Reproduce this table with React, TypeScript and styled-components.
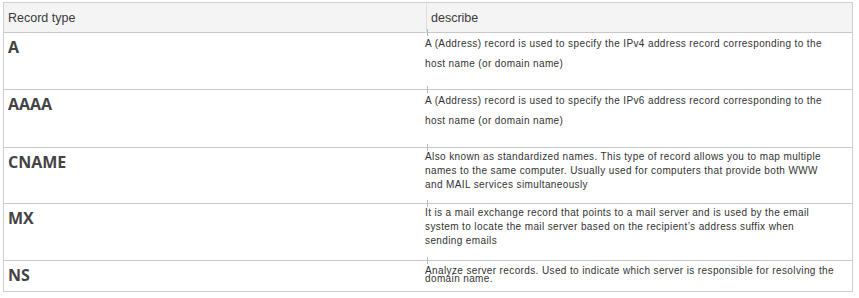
import React from "react";
import styled, { createGlobalStyle } from "styled-components";

const Global = createGlobalStyle`
  html, body { margin: 0; padding: 0; background: #ffffff; }
  body { font-family: "Liberation Sans", Arial, sans-serif; }
`;

const Page = styled.div`
  padding: 2px 0 0 3px;
`;

const Table = styled.div`
  width: 850px;
  box-sizing: border-box;
  border: 1px solid #cfcfcf;
  display: grid;
  grid-template-columns: 423px 1fr;
`;

const HeadCell = styled.div<{ $first?: boolean }>`
  height: 30px;
  box-sizing: border-box;
  background: #f4f4f4;
  border-bottom: 1px solid #c8c8c8;
  border-right: ${(p) => (p.$first ? "1px solid #dedede" : "none")};
  display: flex;
  align-items: center;
  padding-left: 4px;
  font-family: "Liberation Sans", Arial, sans-serif;
  font-size: 12.5px;
  color: #3a3a3a;
`;

const NameCell = styled.div<{ $h: number; $last?: boolean }>`
  height: ${(p) => p.$h}px;
  box-sizing: border-box;
  border-bottom: ${(p) => (p.$last ? "none" : "1px solid #c8c8c8")};
  padding: 3px 0 0 4px;
  font-family: "Open Sans", "Noto Sans", sans-serif;
  font-weight: 700;
  font-size: 16px;
  line-height: 22px;
  color: #444444;
`;

const DescCell = styled.div<{ $h: number; $lh: number; $pt: number; $last?: boolean }>`
  position: relative;
  height: ${(p) => p.$h}px;
  box-sizing: border-box;
  border-bottom: ${(p) => (p.$last ? "none" : "1px solid #c8c8c8")};
  padding: ${(p) => p.$pt}px 0 0 0;
  margin-left: -2px;
  font-family: "Liberation Sans", Arial, sans-serif;
  font-size: 10px;
  letter-spacing: 0.38px;
  line-height: ${(p) => p.$lh}px;
  color: #333333;
  &::before {
    content: "";
    position: absolute;
    left: 2px;
    top: -4px;
    width: 1px;
    height: 7px;
    background: #b8b8b8;
  }
`;

const Line = styled.span`
  display: block;
  white-space: nowrap;
`;

const rows = [
  {
    name: "A",
    h: 57,
    lh: 20,
    pt: 1,
    lines: [
      "A (Address) record is used to specify the IPv4 address record corresponding to the",
      "host name (or domain name)",
    ],
  },
  {
    name: "AAAA",
    h: 58,
    lh: 20,
    pt: 1,
    lines: [
      "A (Address) record is used to specify the IPv6 address record corresponding to the",
      "host name (or domain name)",
    ],
  },
  {
    name: "CNAME",
    h: 56,
    lh: 14,
    pt: 2,
    lines: [
      "Also known as standardized names. This type of record allows you to map multiple",
      "names to the same computer. Usually used for computers that provide both WWW",
      "and MAIL services simultaneously",
    ],
  },
  {
    name: "MX",
    h: 57,
    lh: 14,
    pt: 2,
    lines: [
      "It is a mail exchange record that points to a mail server and is used by the email",
      "system to locate the mail server based on the recipient\u2019s address suffix when",
      "sending emails",
    ],
  },
  {
    name: "NS",
    h: 30,
    lh: 8,
    pt: 6,
    lines: [
      "Analyze server records. Used to indicate which server is responsible for resolving the",
      "domain name.",
    ],
  },
];

export default function App() {
  return (
    <>
      <Global />
      <Page>
        <Table>
          <HeadCell $first>Record type</HeadCell>
          <HeadCell>describe</HeadCell>
          {rows.map((r, i) => (
            <React.Fragment key={r.name}>
              <NameCell $h={r.h} $last={i === rows.length - 1}>
                {r.name}
              </NameCell>
              <DescCell $h={r.h} $lh={r.lh} $pt={r.pt} $last={i === rows.length - 1}>
                {r.lines.map((l) => (
                  <Line key={l}>{l}</Line>
                ))}
              </DescCell>
            </React.Fragment>
          ))}
        </Table>
      </Page>
    </>
  );
}
